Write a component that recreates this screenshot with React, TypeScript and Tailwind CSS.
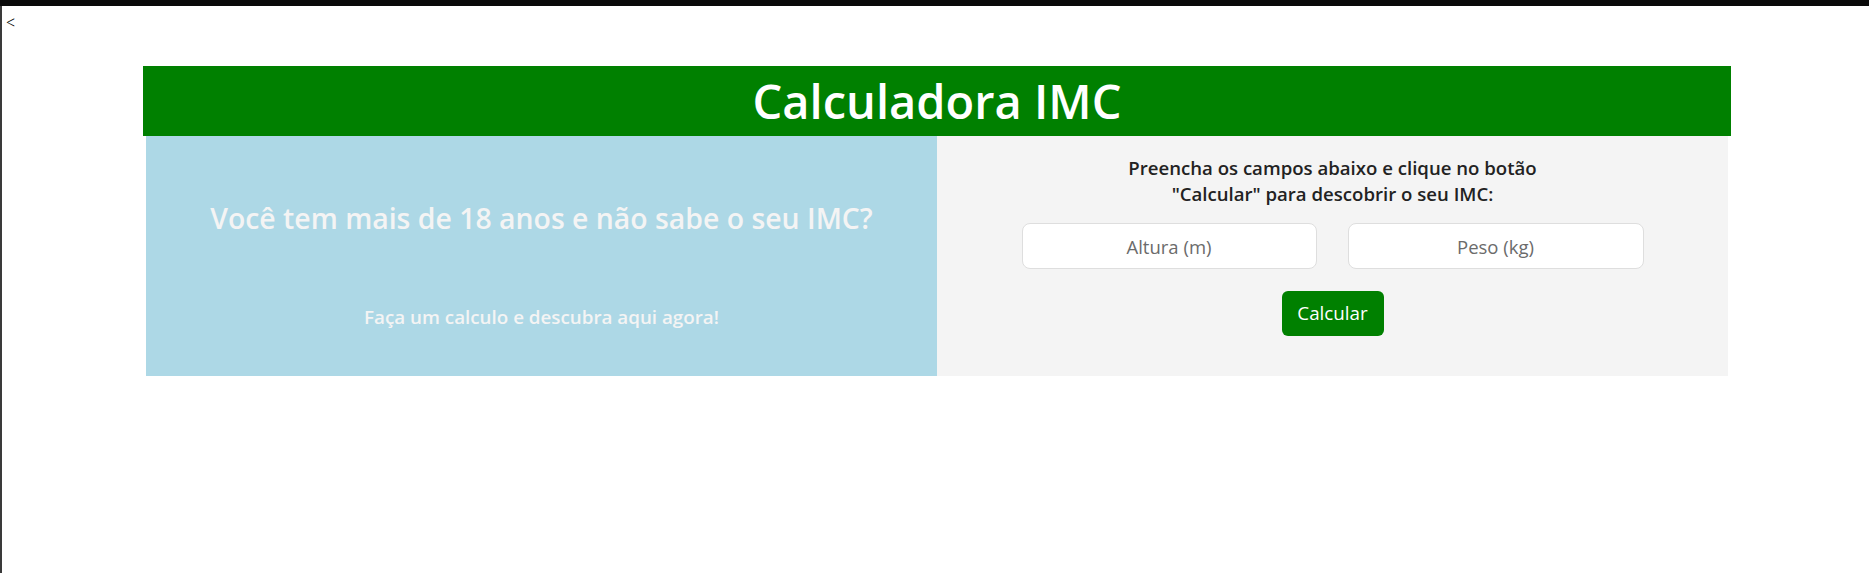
export default function App() {
  return (
    <div className="min-h-[573px] w-full bg-white font-['Open_Sans',sans-serif]">
      <div className="h-[6px] w-full bg-[#0a0a0a]" />
      <div className="flex min-h-[567px] border-l-2 border-[#3a3a3a]">
        <div className="w-[141px] shrink-0">
          <p className="pl-[4px] pt-[7px] font-['Liberation_Serif',serif] text-[16px] leading-[20px] text-black">&lt;</p>
        </div>
        <main className="w-[1588px] pt-[60px]">
          <h1 className="flex h-[70px] items-center justify-center bg-[#008000] text-[47px] font-semibold text-white">
            Calculadora IMC
          </h1>
          <div className="mx-[3px] grid h-[240px] grid-cols-2">
            <section className="flex flex-col items-center bg-[#add8e6] text-[#f4f4f4]">
              <h2 className="pt-[63px] text-[28.4px] font-semibold leading-[38px]">
                Você tem mais de 18 anos e não sabe o seu IMC?
              </h2>
              <p className="pt-[67px] text-[18.8px] font-semibold leading-[26px]">
                Faça um calculo e descubra aqui agora!
              </p>
            </section>
            <section className="flex flex-col items-center bg-[#f4f4f4] pt-[19px]">
              <p className="text-center text-[18.6px] font-semibold leading-[26px] text-[#222]">
                Preencha os campos abaixo e clique no botão
                <br />
                "Calcular" para descobrir o seu IMC:
              </p>
              <div className="mt-[16px] flex gap-[31px]">
                <input
                  placeholder="Altura (m)"
                  className="h-[46px] w-[295px] rounded-[8px] border border-[#dedede] bg-white text-center text-[18.5px] text-black placeholder:text-[#6b6b6b] outline-none"
                />
                <input
                  placeholder="Peso (kg)"
                  className="h-[46px] w-[296px] rounded-[8px] border border-[#dedede] bg-white text-center text-[18.5px] text-black placeholder:text-[#6b6b6b] outline-none"
                />
              </div>
              <button className="mt-[22px] h-[45px] w-[102px] rounded-[6px] bg-[#008000] text-[18.8px] text-white">
                Calcular
              </button>
            </section>
          </div>
        </main>
      </div>
    </div>
  );
}
